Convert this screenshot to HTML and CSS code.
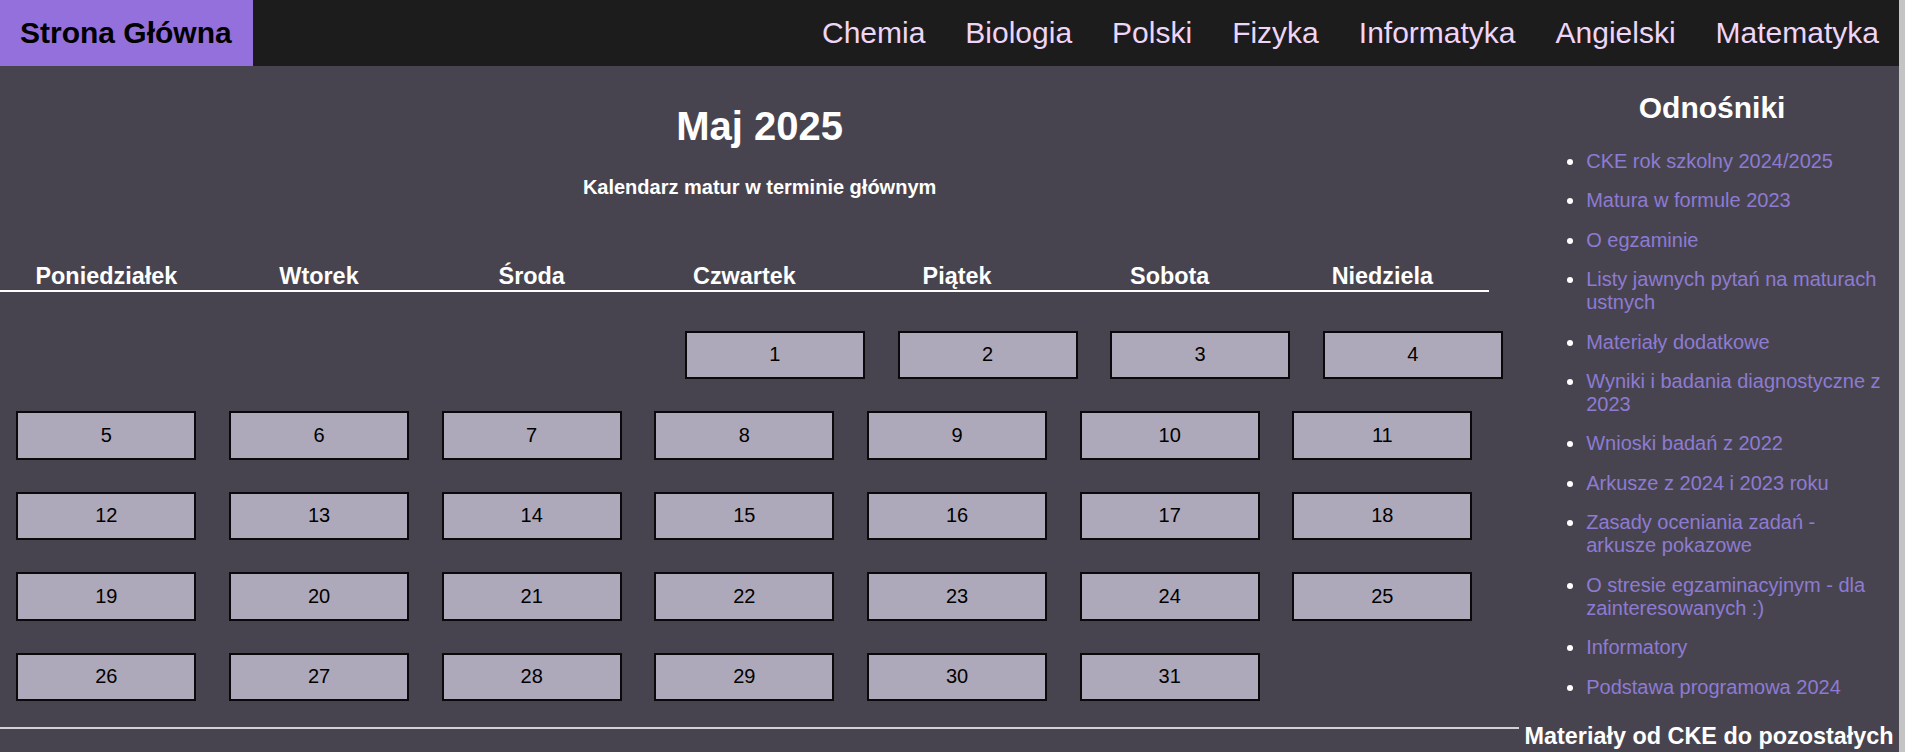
FILE: index.html
```html
<!DOCTYPE html>
<html lang="pl">
<head>
<meta charset="utf-8">
<title>Kalendarz matur</title>
<link rel="stylesheet" href="styles.css">
</head>
<body>
<header class="topbar">
  <a class="brand" href="#">Strona Główna</a>
  <nav class="nav">
    <a href="#">Chemia</a>
    <a href="#">Biologia</a>
    <a href="#">Polski</a>
    <a href="#">Fizyka</a>
    <a href="#">Informatyka</a>
    <a href="#">Angielski</a>
    <a href="#">Matematyka</a>
  </nav>
</header>
<div class="layout">
  <main class="calendar-col">
    <h1 class="month">Maj 2025</h1>
    <h4 class="subtitle">Kalendarz matur w terminie głównym</h4>
    <div class="weekdays">
      <h3>Poniedziałek</h3>
      <h3>Wtorek</h3>
      <h3>Środa</h3>
      <h3>Czwartek</h3>
      <h3>Piątek</h3>
      <h3>Sobota</h3>
      <h3>Niedziela</h3>
    </div>
    <div class="calendar">
      <div class="week week-first">
        <div class="cell"><div class="day">1</div></div>
        <div class="cell"><div class="day">2</div></div>
        <div class="cell"><div class="day">3</div></div>
        <div class="cell"><div class="day">4</div></div>
      </div>
      <div class="week">
        <div class="cell"><div class="day">5</div></div>
        <div class="cell"><div class="day">6</div></div>
        <div class="cell"><div class="day">7</div></div>
        <div class="cell"><div class="day">8</div></div>
        <div class="cell"><div class="day">9</div></div>
        <div class="cell"><div class="day">10</div></div>
        <div class="cell"><div class="day">11</div></div>
      </div>
      <div class="week">
        <div class="cell"><div class="day">12</div></div>
        <div class="cell"><div class="day">13</div></div>
        <div class="cell"><div class="day">14</div></div>
        <div class="cell"><div class="day">15</div></div>
        <div class="cell"><div class="day">16</div></div>
        <div class="cell"><div class="day">17</div></div>
        <div class="cell"><div class="day">18</div></div>
      </div>
      <div class="week">
        <div class="cell"><div class="day">19</div></div>
        <div class="cell"><div class="day">20</div></div>
        <div class="cell"><div class="day">21</div></div>
        <div class="cell"><div class="day">22</div></div>
        <div class="cell"><div class="day">23</div></div>
        <div class="cell"><div class="day">24</div></div>
        <div class="cell"><div class="day">25</div></div>
      </div>
      <div class="week">
        <div class="cell"><div class="day">26</div></div>
        <div class="cell"><div class="day">27</div></div>
        <div class="cell"><div class="day">28</div></div>
        <div class="cell"><div class="day">29</div></div>
        <div class="cell"><div class="day">30</div></div>
        <div class="cell"><div class="day">31</div></div>
      </div>
    </div>
    <hr class="divider">
  </main>
  <aside class="sidebar">
    <h2 class="side-title">Odnośniki</h2>
    <ul class="links">
      <li><a href="#">CKE rok szkolny 2024/2025</a></li>
      <li><a href="#">Matura w formule 2023</a></li>
      <li><a href="#">O egzaminie</a></li>
      <li><a href="#">Listy jawnych pytań na maturach ustnych</a></li>
      <li><a href="#">Materiały dodatkowe</a></li>
      <li><a href="#">Wyniki i badania diagnostyczne z 2023</a></li>
      <li><a href="#">Wnioski badań z 2022</a></li>
      <li><a href="#">Arkusze z 2024 i 2023 roku</a></li>
      <li><a href="#">Zasady oceniania zadań - arkusze pokazowe</a></li>
      <li><a href="#">O stresie egzaminacyjnym - dla zainteresowanych :)</a></li>
      <li><a href="#">Informatory</a></li>
      <li><a href="#">Podstawa programowa 2024</a></li>
    </ul>
    <h3 class="side-sub">Materiały od CKE do pozostałych przedmiotów</h3>
    <ul class="links">
      <li><a href="#">Arkusze egzaminacyjne</a></li>
      <li><a href="#">Harmonogram egzaminów</a></li>
    </ul>
  </aside>
</div>
</body>
</html>
```

FILE: styles.css
```css
html {
  background: #c4c4c4;
}

body {
  margin: 0 6px 0 0;
  background: #48444f;
  color: #ffffff;
  font-family: "Liberation Sans", Arial, sans-serif;
  font-size: 20px;
}

.topbar {
  height: 66px;
  background: #1c1c1c;
  display: flex;
  justify-content: space-between;
  align-items: stretch;
}

.brand {
  display: flex;
  align-items: center;
  padding: 0 21px 0 20px;
  background: #9370db;
  color: #000000;
  font-weight: bold;
  font-size: 30px;
  text-decoration: none;
}

.nav {
  display: flex;
  align-items: center;
}

.nav a {
  padding: 0 20px;
  color: #efd5f7;
  font-size: 30px;
  text-decoration: none;
}

.layout {
  display: flex;
  align-items: flex-start;
}

.calendar-col {
  width: 80%;
  padding-top: 10px;
}

.month {
  margin: 27px 0;
  font-size: 40px;
  line-height: 46px;
  text-align: center;
}

.subtitle {
  margin: 27px 0 0;
  font-size: 20px;
  line-height: 23px;
  text-align: center;
}

.weekdays {
  display: flex;
  margin-top: 63.5px;
}

.weekdays h3 {
  width: 14%;
  margin: 0;
  font-size: 23.4px;
  line-height: 27px;
  text-align: center;
  border-bottom: 2px solid #ffffff;
}

.calendar {
  margin-top: 23px;
}

.week {
  display: flex;
  justify-content: flex-start;
}

.week-first {
  justify-content: flex-end;
}

.cell {
  width: 14%;
  padding: 16px 0;
  display: flex;
  justify-content: center;
}

.day {
  box-sizing: border-box;
  width: 180px;
  height: 48.5px;
  border: 2px solid #0a0a0a;
  background: #aea9ba;
  color: #000000;
  font-size: 20px;
  display: flex;
  align-items: center;
  justify-content: center;
}

.divider {
  margin: 10px 0 0;
  height: 0;
  border: none;
  border-top: 2px solid #d2d2d2;
}

.sidebar {
  width: 20%;
  box-sizing: border-box;
  padding: 0 14px 0 20px;
}

.side-title {
  margin: 24.9px 0;
  font-size: 30px;
  text-align: center;
}

.links {
  margin: 20px 0 20px 7px;
  padding-left: 40px;
}

.links li {
  margin-bottom: 16.45px;
  line-height: 23px;
}

.links li:last-child {
  margin-bottom: 0;
}

.links a {
  color: #8d7bd3;
  text-decoration: none;
}

.side-sub {
  margin: 24px -14px 24px -20px;
  font-size: 23.4px;
  line-height: 27px;
  text-align: center;
}
```
